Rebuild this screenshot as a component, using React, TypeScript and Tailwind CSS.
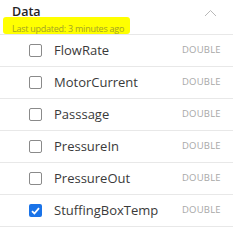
import React, { useState } from 'react';

interface Field {
  name: string;
  type: string;
  checked: boolean;
}

const initialFields: Field[] = [
  { name: 'FlowRate', type: 'DOUBLE', checked: false },
  { name: 'MotorCurrent', type: 'DOUBLE', checked: false },
  { name: 'Passsage', type: 'DOUBLE', checked: false },
  { name: 'PressureIn', type: 'DOUBLE', checked: false },
  { name: 'PressureOut', type: 'DOUBLE', checked: false },
  { name: 'StuffingBoxTemp', type: 'DOUBLE', checked: true },
];

const App = () => {
  const [fields, setFields] = useState<Field[]>(initialFields);

  const toggle = (i: number) => {
    setFields(prev => prev.map((f, idx) => (idx === i ? { ...f, checked: !f.checked } : f)));
  };

  return (
    <div className="w-[233px] h-[230px] bg-white overflow-hidden font-['Open_Sans',sans-serif]">
      {/* Header */}
      <div className="relative h-[35px] border-b border-[#e8e8e8] pl-3">
        <div className="pt-[4px] text-[12.5px] font-semibold leading-[16px] text-[#252525]">Data</div>
        <div className="absolute left-[3px] top-[17px] h-[17px] w-[127px] rounded-[3px] bg-[#ffff00]" />
        <div className="relative pt-[3px] text-[9px] leading-[12px] tracking-[-0.25px] text-[#a3a326]">Last updated: 3 minutes ago</div>
        <svg className="absolute left-[204px] top-[9px]" width="13" height="8" viewBox="0 0 13 8" fill="none">
          <path d="M1 7L6.5 1.5L12 7" stroke="#b8b8b8" strokeWidth="1" />
        </svg>
      </div>

      {/* Rows */}
      {fields.map((f, i) => (
        <div key={f.name} className="flex h-[32px] items-center border-b border-[#e8e8e8]">
          <button
            type="button"
            onClick={() => toggle(i)}
            className={
              f.checked
                ? 'ml-[29px] flex h-[13px] w-[13px] items-center justify-center rounded-[2px] bg-[#1a73e8]'
                : 'ml-[29px] h-[13px] w-[13px] rounded-[2px] border border-[#8a8a8a] bg-white'
            }
          >
            {f.checked && (
              <svg width="9" height="8" viewBox="0 0 9 8" fill="none">
                <path d="M1 4.2L3.4 6.5L8 1.2" stroke="white" strokeWidth="1.8" />
              </svg>
            )}
          </button>
          <span className="ml-[12px] w-[128px] text-[13px] text-[#3a3a3a]">{f.name}</span>
          <span className="text-[9.5px] tracking-[0.2px] text-[#a8a8a8]">{f.type}</span>
        </div>
      ))}
    </div>
  );
};

export default App;
